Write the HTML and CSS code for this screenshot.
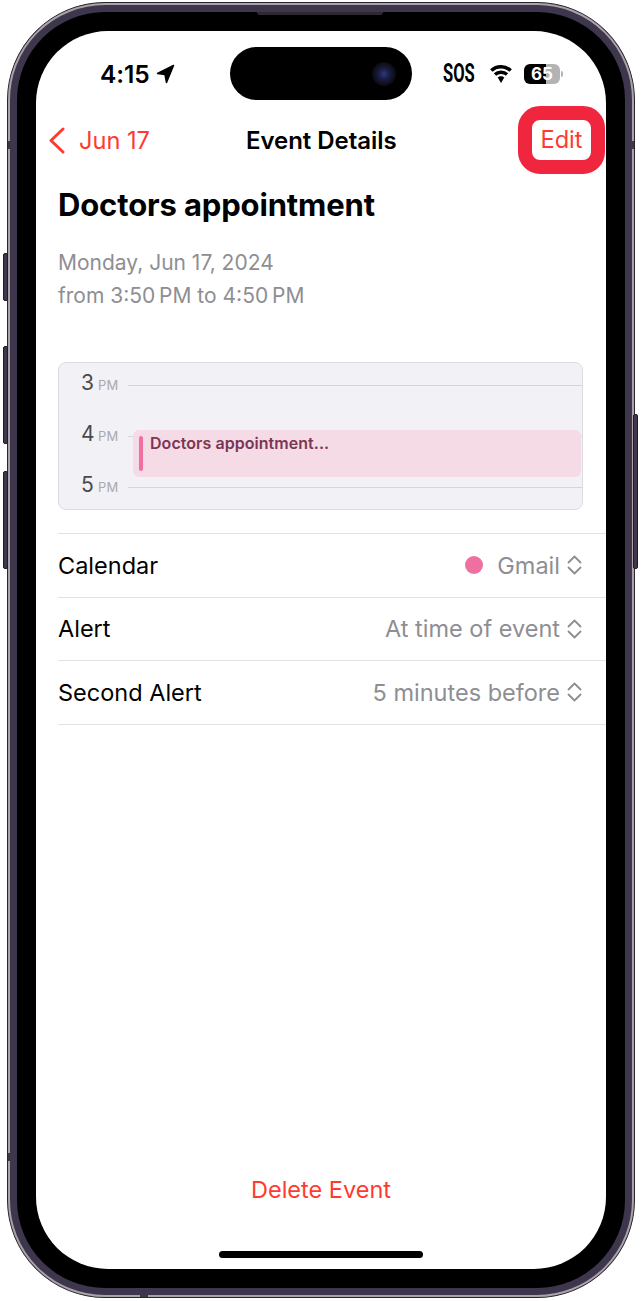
FILE: index.html
```html
<!DOCTYPE html>
<html lang="en">
<head>
  <meta charset="utf-8">
  <title>Event Details</title>
  <link rel="stylesheet" href="styles.css">
</head>
<body>
  <div class="phone">
    <span class="side-btn action"></span>
    <span class="side-btn vol-up"></span>
    <span class="side-btn vol-down"></span>
    <span class="side-btn power"></span>
    <span class="antenna ant-tl"></span>
    <span class="antenna ant-tr"></span>
    <span class="antenna ant-bl"></span>
    <span class="antenna ant-bb"></span>
    <div class="rim">
      <div class="band">
        <div class="bezel">
          <span class="speaker"></span>
          <div class="screen">

            <div class="status">
              <div class="status-left">
                <span class="time">4:15</span>
                <svg class="loc" width="19" height="20" viewBox="0 0 19 20"><path d="M17.500 1.500 1.500 9.500 9 10.500 10.500 18.500z" fill="#000" stroke="#000" stroke-width="1.500" stroke-linejoin="round"/></svg>
              </div>
              <div class="island"><span class="camera"></span></div>
              <div class="status-right">
                <span class="sos">SOS</span>
                <svg class="wifi" width="24" height="18" viewBox="0 0 24 18"><path d="M12 3.400c3.300 0 6.300 1.300 8.500 3.400l2.400-2.500A15.700 15.700 0 0 0 12 0 15.700 15.700 0 0 0 1.100 4.300l2.400 2.500A12.300 12.300 0 0 1 12 3.400z"/><path d="M12 8.900c1.900 0 3.600.7 4.800 1.900l2.400-2.500A10.400 10.400 0 0 0 12 5.500a10.400 10.400 0 0 0-7.200 2.800l2.400 2.500A7 7 0 0 1 12 8.900z"/><path d="M12 11.200c-1.300 0-2.400.5-3.300 1.300L12 18l3.300-5.500c-.9-.8-2-1.300-3.300-1.300z"/></svg>
                <div class="battery">
                  <span class="battery-num">65</span>
                </div>
                <span class="battery-nub"></span>
              </div>
            </div>

            <div class="nav">
              <a class="back">
                <svg width="17" height="27" viewBox="0 0 17 27"><path d="M15 2 3 13.500 15 25" fill="none" stroke="#ff3b30" stroke-width="3" stroke-linecap="round" stroke-linejoin="round"/></svg>
                <span>Jun 17</span>
              </a>
              <div class="nav-title">Event Details</div>
              <a class="edit">Edit</a>
            </div>

            <div class="content">
              <h1 class="title">Doctors appointment</h1>
              <p class="when">Monday, Jun 17, 2024<br>from 3:50&#8239;PM to 4:50&#8239;PM</p>

              <div class="day">
                <div class="hour"><b>3</b><small>PM</small><i></i></div>
                <div class="hour"><b>4</b><small>PM</small><i></i></div>
                <div class="hour"><b>5</b><small>PM</small><i></i></div>
                <div class="event"><span class="event-bar"></span><span class="event-name">Doctors appointment...</span></div>
              </div>

              <div class="rows">
                <div class="row">
                  <span>Calendar</span>
                  <span class="val"><span class="dot"></span><span class="gmail">Gmail</span>
                    <svg class="updown" width="15" height="20" viewBox="0 0 15 20"><path d="M1.500 7.500 7.500 1.500l6 6M1.500 12.500l6 6 6-6" fill="none" stroke="#8e8e93" stroke-width="1.800" stroke-linecap="round" stroke-linejoin="round"/></svg>
                  </span>
                </div>
                <div class="row">
                  <span>Alert</span>
                  <span class="val">At time of event
                    <svg class="updown" width="15" height="20" viewBox="0 0 15 20"><path d="M1.500 7.500 7.500 1.500l6 6M1.500 12.500l6 6 6-6" fill="none" stroke="#8e8e93" stroke-width="1.800" stroke-linecap="round" stroke-linejoin="round"/></svg>
                  </span>
                </div>
                <div class="row">
                  <span>Second Alert</span>
                  <span class="val">5 minutes before
                    <svg class="updown" width="15" height="20" viewBox="0 0 15 20"><path d="M1.500 7.500 7.500 1.500l6 6M1.500 12.500l6 6 6-6" fill="none" stroke="#8e8e93" stroke-width="1.800" stroke-linecap="round" stroke-linejoin="round"/></svg>
                  </span>
                </div>
              </div>
            </div>

            <div class="delete">Delete Event</div>
            <div class="home"></div>

          </div>
        </div>
      </div>
    </div>
  </div>
</body>
</html>
```

FILE: styles.css
```css
html, body { margin: 0; height: 1301px; overflow: hidden; background: #fff; }
body { padding: 2px 0 0 7px; box-sizing: border-box; font-family: Inter, "Liberation Sans", sans-serif; color: #000; }

/* device frame */
.phone { position: relative; width: 628px; height: 1296px; box-sizing: border-box; border: 1px solid #2a2331; border-radius: 98px; background: #2a2331; }
.rim { height: 100%; box-sizing: border-box; border: 2px solid #a9a3a8; border-radius: 97px; background: #a9a3a8; }
.band { height: 100%; box-sizing: border-box; border: 7px solid #3e364c; border-radius: 95px; background: #3e364c; }
.bezel { position: relative; height: 100%; box-sizing: border-box; padding: 19px; border-radius: 88px; background: #000; }
.screen { position: relative; height: 100%; display: flex; flex-direction: column; border-radius: 72px; background: #fff; overflow: hidden; }

.side-btn { position: absolute; width: 5px; background: #3e364c; border: 1px solid #1f1a26; box-sizing: border-box; border-radius: 2px; }
.action { left: -5px; top: 250px; height: 48px; }
.vol-up { left: -5px; top: 343px; height: 98px; }
.vol-down { left: -5px; top: 468px; height: 98px; }
.power { right: -4px; top: 411px; height: 155px; }
.antenna { position: absolute; background: #3e364c; }
.ant-tl { left: 0; top: 138px; width: 10px; height: 8px; }
.ant-tr { right: 0; top: 138px; width: 10px; height: 8px; }
.ant-bl { left: 0; top: 1150px; width: 10px; height: 8px; }
.ant-bb { left: 132px; bottom: 0; width: 8px; height: 10px; }
.speaker { position: absolute; left: 240px; top: 0; width: 126px; height: 3px; background: #2c2a30; border-radius: 0 0 3px 3px; }

/* status bar */
.status { display: flex; align-items: center; padding-top: 16px; height: 53px; }
.status-left { display: flex; align-items: center; width: 130px; padding-left: 64px; }
.time { font-size: 24.5px; font-weight: 600; letter-spacing: -0.1px; }
.loc { margin-left: 6px; }
.island { position: relative; width: 182px; height: 53px; border-radius: 27px; background: #000; }
.camera { position: absolute; right: 16px; top: 15px; width: 24px; height: 24px; border-radius: 50%; background: radial-gradient(circle, #2d3a80 0, #1a1f44 30%, #0a0a10 70%); }
.status-right { display: flex; align-items: center; margin-left: 31px; }
.sos { width: 32px; font-family: Roboto, sans-serif; font-size: 25px; font-weight: 700; transform: scaleX(.66); transform-origin: left; }
.wifi { margin-left: 14px; }
.battery { position: relative; width: 36px; height: 20px; margin-left: 11px; border-radius: 6px; background: linear-gradient(90deg, #000 0, #000 62%, #b3b3b3 62%); text-align: center; }
.battery-num { font-size: 17px; font-weight: 700; line-height: 20px; color: #fff; }
.battery-nub { width: 2px; height: 6px; margin-left: 1px; border-radius: 0 2px 2px 0; background: #b3b3b3; }

/* nav */
.nav { display: flex; align-items: center; height: 68px; margin-top: 6px; font-size: 23.6px; }
.back { display: flex; align-items: center; gap: 14px; width: 198px; padding-left: 12px; color: #ff3b30; }
.nav-title { width: 272px; font-size: 24px; font-weight: 600; letter-spacing: -0.05px; }
.edit { width: 87px; height: 68px; box-sizing: border-box; border: 14px solid #f0263f; border-radius: 22px; color: #ff3b30; line-height: 40px; text-align: center; background: #fff; }

/* content */
.content { padding-left: 22px; }
.title { margin: 12px 0 0; font-size: 31px; line-height: 38px; font-weight: 700; letter-spacing: -0.14px; }
.when { margin: 22px 0 0; font-size: 21px; line-height: 33px; color: #8e8e93; }

.day { position: relative; width: 525px; height: 148px; margin-top: 50px; box-sizing: border-box; padding-top: 8px; border: 1px solid #dcdce0; border-radius: 8px; background: #f2f1f6; }
.hour { display: flex; align-items: flex-start; height: 51px; padding-left: 22px; }
.hour:last-of-type { height: auto; }
.hour b { width: 16px; font-size: 21px; line-height: 24px; font-weight: 400; color: #4a4a4e; }
.hour small { width: 28px; margin-top: 2px; padding-left: 1px; box-sizing: border-box; font-size: 13px; line-height: 24px; letter-spacing: .2px; color: #a9a9ad; }
.hour i { flex: 1; height: 1px; margin: 14px 0 0 3px; background: #d6d5da; }
.event { position: absolute; left: 74px; top: 67px; right: 1px; height: 47px; display: flex; padding: 6px; box-sizing: border-box; border-radius: 6px; background: #f4dbe6; }
.event-bar { width: 4px; height: 35px; border-radius: 2px; background: #ef6fa0; }
.event-name { margin-left: 7px; font-size: 16px; line-height: 15px; font-weight: 600; letter-spacing: .05px; color: #7d3553; }

.rows { margin-top: 23px; }
.row { display: flex; justify-content: space-between; align-items: center; height: 62.6px; padding-right: 24px; border-top: 1px solid #e3e3e6; font-size: 23.5px; }
.row:last-child { border-bottom: 1px solid #e3e3e6; }
.val { display: flex; align-items: center; color: #8e8e93; }
.dot { width: 18px; height: 18px; border-radius: 50%; background: #ef6fa0; }
.gmail { margin-left: 14px; }
.updown { margin-left: 7px; }

.delete { margin-top: auto; text-align: center; font-size: 23.5px; color: #ff3b30; }
.home { width: 204px; height: 7px; margin: 47px auto 11px; border-radius: 4px; background: #000; }
```
